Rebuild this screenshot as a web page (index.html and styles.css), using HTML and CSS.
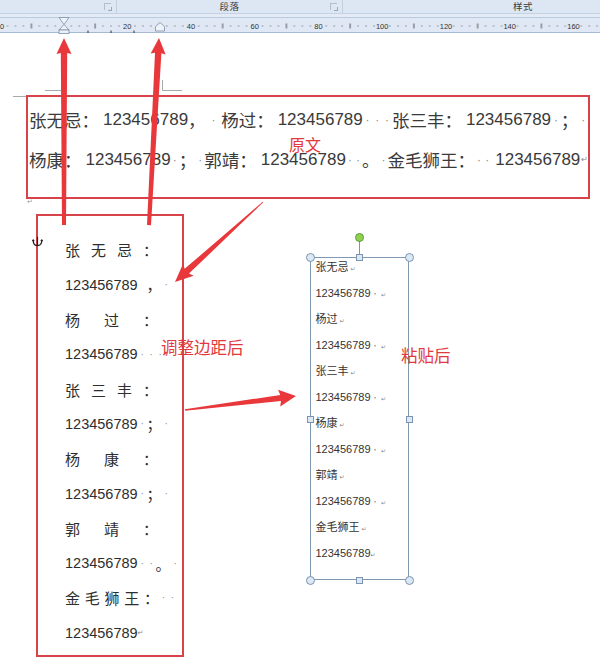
FILE: index.html
```html
<!DOCTYPE html>
<html>
<head>
<meta charset="utf-8">
<link rel="stylesheet" href="styles.css">
</head>
<body>
<div class="screen">
  <div class="ribbon">
    <div class="grp g1"><span class="launch"></span></div>
    <div class="grp g2"><span class="glabel">段落</span><span class="launch"></span></div>
    <div class="grp g3"><span class="glabel">样式</span></div>
  </div>
  <svg class="ruler" width="600" height="20" viewBox="0 0 600 20">
    <defs>
      <pattern id="ticks" x="-0.5" y="0" width="63.75" height="20" patternUnits="userSpaceOnUse">
        <rect x="7.5" y="11.5" width="1" height="1" fill="#555"/>
        <rect x="15.5" y="11.5" width="1" height="1" fill="#555"/>
        <rect x="23.4" y="11.5" width="1" height="1" fill="#555"/>
        <rect x="31.4" y="9.5" width="1" height="5" fill="#555"/>
        <rect x="39.3" y="11.5" width="1" height="1" fill="#555"/>
        <rect x="47.3" y="11.5" width="1" height="1" fill="#555"/>
        <rect x="55.3" y="11.5" width="1" height="1" fill="#555"/>
      </pattern>
    </defs>
    <rect x="0" y="0" width="600" height="3" fill="#e4ebf5"/>
    <rect x="0" y="3" width="600" height="16" fill="#dfe8f4"/>
    <rect x="0" y="3" width="600" height="1" fill="#b9cbe1"/>
    <rect x="0" y="18" width="600" height="1" fill="#a3b9d6"/>
    <rect x="0" y="0" width="600" height="20" fill="url(#ticks)"/>
    <g class="rnum">
      <text x="2" y="15">0</text>
      <text x="127.2" y="15">20</text>
      <text x="191" y="15">40</text>
      <text x="254.7" y="15">60</text>
      <text x="318.5" y="15">80</text>
      <text x="382.2" y="15">100</text>
      <text x="446" y="15">120</text>
      <text x="509.7" y="15">140</text>
      <text x="573.5" y="15">160</text>
    </g>
    <rect x="87.5" y="16.5" width="1" height="2.5" fill="#333"/>
    <rect x="110.5" y="16.5" width="1" height="2.5" fill="#333"/>
    <rect x="133.5" y="16.5" width="1" height="2.5" fill="#333"/>
    <g fill="#eef3f9" stroke="#7b8ea7" stroke-width="0.8">
      <path d="M59 3.5 H69 L64 10.5 Z"/>
      <path d="M59 16 H69 L64 10.5 Z"/>
      <rect x="59" y="16" width="10" height="3.6"/>
      <path d="M160 8.5 L164.5 12.5 V17 H155.5 V12.5 Z"/>
    </g>
  </svg>

  <div class="page">
    <div class="orig">
      <div class="oline"><span class="c">张无忌：</span><span class="n">123456789</span><span class="c">，</span><span class="d dw">·</span><span class="c">杨过：</span><span class="n">123456789</span><span class="d">·</span><span class="d">·</span><span class="d">·</span><span class="c">张三丰：</span><span class="n">123456789</span><span class="d">·</span><span class="c">；</span><span class="d">·</span></div>
      <div class="oline"><span class="c">杨康：</span><span class="n">123456789</span><span class="d">·</span><span class="c">；</span><span class="d">·</span><span class="c">郭靖：</span><span class="n">123456789</span><span class="d">·</span><span class="d">·</span><span class="c">。</span><span class="d">·</span><span class="c">金毛狮王：</span><span class="d">·</span><span class="d">·</span><span class="n">123456789</span><span class="ret">↵</span></div>
    </div>
    <span class="para-mark">↵</span>

    <div class="lower">
      <div class="narrow">
        <div class="nl"><div class="dist"><span>张</span><span>无</span><span>忌</span><span>：</span></div></div>
        <div class="nl"><span class="num">123456789</span><span class="sp"></span><span class="fw">，</span><span class="dt">·</span></div>
        <div class="nl"><div class="dist"><span>杨</span><span>过</span><span>：</span></div></div>
        <div class="nl"><span class="num">123456789</span><span class="dt">·</span><span class="dt">·</span><span class="dt">·</span></div>
        <div class="nl"><div class="dist"><span>张</span><span>三</span><span>丰</span><span>：</span></div></div>
        <div class="nl"><span class="num">123456789</span><span class="dt">·</span><span class="fw">；</span><span class="dt">·</span></div>
        <div class="nl"><div class="dist"><span>杨</span><span>康</span><span>：</span></div></div>
        <div class="nl"><span class="num">123456789</span><span class="dt">·</span><span class="fw">；</span><span class="dt">·</span></div>
        <div class="nl"><div class="dist"><span>郭</span><span>靖</span><span>：</span></div></div>
        <div class="nl"><span class="num">123456789</span><span class="dt">·</span><span class="dt">·</span><span class="fw">。</span><span class="dt">·</span></div>
        <div class="nl"><div class="dist dist5"><span>金</span><span>毛</span><span>狮</span><span>王</span><span>：</span></div><span class="dt">·</span><span class="dt">·</span></div>
        <div class="nl"><span class="num">123456789</span><span class="ret2">↵</span></div>
      </div>

      <div class="tbox">
        <div class="tlines">
          <div class="tl">张无忌<span class="r">↵</span></div>
          <div class="tl"><span class="tn">123456789</span><span class="td">·</span><span class="r">↵</span></div>
          <div class="tl">杨过<span class="r">↵</span></div>
          <div class="tl"><span class="tn">123456789</span><span class="td">·</span><span class="r">↵</span></div>
          <div class="tl">张三丰<span class="r">↵</span></div>
          <div class="tl"><span class="tn">123456789</span><span class="td">·</span><span class="r">↵</span></div>
          <div class="tl">杨康<span class="r">↵</span></div>
          <div class="tl"><span class="tn">123456789</span><span class="td">·</span><span class="r">↵</span></div>
          <div class="tl">郭靖<span class="r">↵</span></div>
          <div class="tl"><span class="tn">123456789</span><span class="td">·</span><span class="r">↵</span></div>
          <div class="tl">金毛狮王<span class="r">↵</span></div>
          <div class="tl"><span class="tn">123456789</span><span class="r rn">↵</span></div>
        </div>
        <span class="rot-line"></span>
        <span class="rot"></span>
        <span class="h hc tl-c"></span>
        <span class="h hc tr-c"></span>
        <span class="h hc bl-c"></span>
        <span class="h hc br-c"></span>
        <span class="h hs t-s"></span>
        <span class="h hs b-s"></span>
        <span class="h hs l-s"></span>
        <span class="h hs r-s"></span>
      </div>
    </div>
  </div>

  <span class="note note-orig">原文</span>
  <span class="note note-adj">调整边距后</span>
  <span class="note note-paste">粘贴后</span>

  <svg class="anchor" width="11" height="11" viewBox="0 0 11 11">
    <path d="M5.5 0.8 V9.6 M1.2 4.2 Q1.2 9.6 5.5 9.6 Q9.8 9.6 9.8 4.2 M0.2 5.2 L1.2 4 L2.2 5.2 M8.8 5.2 L9.8 4 L10.8 5.2" fill="none" stroke="#222" stroke-width="1.2"/>
  </svg>

  <svg class="overlay" width="600" height="664" viewBox="0 0 600 664">
    <g stroke="#a9a9a9" stroke-width="1" fill="none">
      <path d="M13 96.5 H26"/>
      <path d="M45 90.5 H62"/>
      <path d="M162.5 80 V90.5 H182"/>
    </g>
    <g fill="#e8383b">
      <polygon transform="translate(64 38) rotate(-90)" points="0,0 -16,-7.5 -15,-3.2 -187,-2 -187,2 -15,3.2 -16,7.5"/>
      <polygon transform="translate(159 38) rotate(-86.94)" points="0,0 -16,-7.5 -15,-3.2 -187.3,-2 -187.3,2 -15,3.2 -16,7.5"/>
      <polygon transform="translate(175 282) rotate(137.73)" points="0,0 -18,-8 -16,-3.2 -118.9,-0.4 -118.9,0.4 -16,3.2 -18,8"/>
      <polygon transform="translate(296 396) rotate(-7.19)" points="0,0 -17,-8.5 -15.5,-3 -111.9,-0.8 -111.9,0.8 -15.5,3 -17,8.5"/>
    </g>
  </svg>
</div>
</body>
</html>
```

FILE: styles.css
```css
html, body {
  margin: 0;
  padding: 0;
  background: #ffffff;
}

.screen {
  position: relative;
  width: 600px;
  height: 664px;
  overflow: hidden;
  background: #ffffff;
  font-family: "Noto Sans CJK SC", "Liberation Sans", sans-serif;
}

/* ribbon */
.ribbon {
  display: flex;
  height: 14px;
  background: #dde7f3;
  border-bottom: 1px solid #c4d2e5;
  box-sizing: border-box;
}

.grp {
  position: relative;
  flex: none;
  height: 13px;
  display: flex;
  justify-content: center;
  box-sizing: border-box;
}

.g1 { width: 117px; border-right: 1px solid #c2cfdf; }
.g2 { width: 226px; border-right: 1px solid #c2cfdf; }
.g3 { width: 360px; }

.glabel {
  font-size: 9.5px;
  line-height: 13px;
  color: #3b3b3b;
  letter-spacing: 0.5px;
}

.launch {
  position: absolute;
  right: 5px;
  top: 3px;
  width: 6px;
  height: 6px;
  border-left: 1px solid #a9b4c2;
  border-top: 1px solid #a9b4c2;
  opacity: 0.8;
}

.launch::after {
  content: "";
  position: absolute;
  right: -1px;
  bottom: -1px;
  width: 3px;
  height: 3px;
  border-right: 1px solid #8d98a6;
  border-bottom: 1px solid #8d98a6;
}

.ruler {
  display: block;
}

.rnum text {
  font-family: "Liberation Sans", sans-serif;
  font-size: 7.5px;
  fill: #333;
  text-anchor: middle;
}

/* page */
.page {
  position: relative;
  padding-top: 61px;
}

.orig {
  margin-left: 26px;
  width: 564px;
  height: 104px;
  box-sizing: border-box;
  border: 2px solid #d8434a;
  padding: 3px 0 0 1px;
  color: #3a3a3a;
}

.oline {
  height: 40px;
  line-height: 40px;
  white-space: nowrap;
  display: flex;
  align-items: center;
}

.c {
  font-family: "Noto Sans CJK SC", sans-serif;
  font-size: 17.5px;
}

.n {
  font-family: "Liberation Sans", sans-serif;
  font-size: 17px;
  margin-left: 4px;
}

.d {
  display: inline-block;
  width: 10px;
  text-align: center;
  color: #8a8a8a;
  font-size: 12px;
  font-family: "Liberation Sans", sans-serif;
}

.dw {
  width: 16px;
}

.ret {
  font-family: "DejaVu Sans", sans-serif;
  font-size: 8px;
  color: #888;
  margin-left: 1px;
}

.para-mark {
  position: absolute;
  left: 27px;
  top: 164px;
  font-family: "DejaVu Sans", sans-serif;
  font-size: 7px;
  line-height: 8px;
  color: #9a9a9a;
}

.lower {
  display: flex;
  align-items: flex-start;
  margin-top: 15px;
}

.narrow {
  margin-left: 36px;
  width: 148px;
  height: 443px;
  box-sizing: border-box;
  border: 2px solid #d8434a;
  padding: 16.6px 0 0 27px;
  color: #2e2e2e;
}

.nl {
  height: 34.8px;
  display: flex;
  align-items: center;
  white-space: nowrap;
}

.dist {
  width: 93px;
  display: flex;
  justify-content: space-between;
  font-family: "Noto Sans CJK SC", sans-serif;
  font-size: 15px;
}

.dist5 {
  width: 94px;
}

.num {
  font-family: "Liberation Sans", sans-serif;
  font-size: 14.5px;
}

.sp {
  display: inline-block;
  width: 9px;
}

.fw {
  font-family: "Noto Sans CJK SC", sans-serif;
  font-size: 15px;
}

.dt {
  display: inline-block;
  width: 9px;
  text-align: center;
  color: #8c8c8c;
  font-size: 10px;
  font-family: "Liberation Sans", sans-serif;
}

.ret2 {
  font-family: "DejaVu Sans", sans-serif;
  font-size: 7px;
  color: #888;
}

/* text box */
.tbox {
  position: relative;
  margin: 43px 0 0 126px;
  width: 99px;
  height: 323px;
  box-sizing: border-box;
  border: 1.5px solid #7f97b0;
  padding: 0 0 0 4.5px;
}

.tlines {
  margin-top: -5.5px;
}

.tl {
  height: 26px;
  line-height: 26px;
  font-family: "Noto Sans CJK SC", sans-serif;
  font-size: 11px;
  color: #333;
  white-space: nowrap;
}

.tn {
  font-family: "Liberation Sans", sans-serif;
  font-size: 11px;
}

.td {
  color: #999;
  font-size: 8px;
  margin-left: 0.5px;
}

.r {
  font-family: "DejaVu Sans", sans-serif;
  font-size: 6px;
  color: #888;
  margin-left: 2px;
}

.rn {
  margin-left: 0;
}

.h {
  position: absolute;
  box-sizing: border-box;
  background: #dce8f4;
  border: 1px solid #7b95b0;
}

.hc {
  width: 9px;
  height: 9px;
  border-radius: 50%;
}

.hs {
  width: 7px;
  height: 7px;
}

.tl-c { left: -5.5px; top: -5.5px; }
.tr-c { right: -5.5px; top: -5.5px; }
.bl-c { left: -5.5px; bottom: -5.5px; }
.br-c { right: -5.5px; bottom: -5.5px; }
.t-s { left: 44.5px; top: -4.5px; }
.b-s { left: 44.5px; bottom: -4.5px; }
.l-s { left: -4.5px; top: 157.5px; }
.r-s { right: -4.5px; top: 157.5px; }

.rot-line {
  position: absolute;
  left: 47.5px;
  top: -17px;
  width: 1px;
  height: 13px;
  background: #7b95b0;
}

.rot {
  position: absolute;
  left: 43.5px;
  top: -25.5px;
  width: 9px;
  height: 9px;
  box-sizing: border-box;
  border-radius: 50%;
  background: #8fd14f;
  border: 1px solid #5f9a3a;
}

/* annotations */
.note {
  position: absolute;
  color: #e2393d;
  font-family: "Noto Sans CJK SC", sans-serif;
  white-space: nowrap;
}

.note-orig {
  left: 289px;
  top: 134px;
  font-size: 16px;
  line-height: 20px;
}

.note-adj {
  left: 161px;
  top: 336px;
  font-size: 16.5px;
  line-height: 22px;
}

.note-paste {
  left: 401px;
  top: 344px;
  font-size: 16.5px;
  line-height: 22px;
}

.anchor {
  position: absolute;
  left: 32px;
  top: 236px;
}

.overlay {
  position: absolute;
  left: 0;
  top: 0;
  pointer-events: none;
}
```
